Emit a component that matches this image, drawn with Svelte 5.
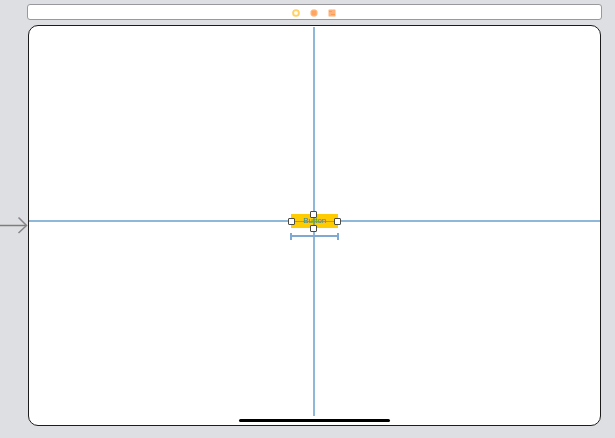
<script>
  const handles = ['top', 'right', 'bottom', 'left'];
</script>

<main class="editor">
  <header class="scene-dock">
    <svg width="10" height="10" viewBox="0 0 10 10" aria-hidden="true">
      <circle cx="5" cy="5" r="2.9" fill="#fffdf2" stroke="#ffd166" stroke-width="1.9" />
    </svg>
    <svg width="10" height="10" viewBox="0 0 10 10" aria-hidden="true">
      <circle cx="5" cy="5" r="3.7" fill="#ffc18d" />
      <rect x="2.5" y="2.5" width="5" height="5" rx="1" fill="#ffa55f" />
    </svg>
    <svg width="10" height="10" viewBox="0 0 10 10" aria-hidden="true">
      <rect x="1.5" y="1.5" width="7" height="7" rx="0.5" fill="#ffb27a" />
      <path d="M2 3.5h3M4 6.5h4" stroke="#ff9c50" stroke-width="1" />
    </svg>
  </header>

  <section class="scene">
    <svg class="entry" width="28" height="18" viewBox="0 0 28 18" aria-hidden="true">
      <path d="M0 9.5H26" stroke="#7c7f79" stroke-width="1.5" fill="none" />
      <path d="M18.5 1.5L26.5 9.5L18.5 17" stroke="#858587" stroke-width="1.5" fill="none" />
    </svg>

    <div class="device">
      <div class="guide horizontal"></div>
      <div class="guide vertical"></div>
      <div class="selection">
        <button type="button">Button</button>
        <div class="cross-h"></div>
        <div class="cross-v"></div>
        {#each handles as side}
          <span class="handle {side}"></span>
        {/each}
        <div class="width-constraint"></div>
      </div>
      <div class="home-indicator"></div>
    </div>
  </section>
</main>

<style>
  :global(body) {
    background: #dedfe3;
  }

  .editor {
    box-sizing: border-box;
    min-height: 100vh;
    padding: 4px 13px 12px 27px;
    display: flex;
    flex-direction: column;
    gap: 5px;
    font-family: "Liberation Sans", Arial, sans-serif;
  }

  .scene-dock {
    box-sizing: border-box;
    height: 16px;
    padding: 2px 2px 0 0;
    display: flex;
    align-items: center;
    justify-content: center;
    gap: 8px;
    background: #fff;
    border: 1px solid #98989d;
    border-radius: 3px;
  }

  .scene {
    position: relative;
    flex: 1;
    display: flex;
    padding: 0 1px;
  }

  .entry {
    position: absolute;
    left: -27px;
    top: 50%;
    transform: translateY(-10px);
  }

  .device {
    position: relative;
    flex: 1;
    display: flex;
    align-items: center;
    justify-content: center;
    background: #fff;
    border: 1px solid #1c1c1d;
    border-radius: 10px;
  }

  .guide {
    position: absolute;
    background: #8fb7d9;
  }

  .horizontal {
    left: 0;
    right: 0;
    top: calc(50% - 6px);
    height: 2px;
  }

  .vertical {
    top: 1px;
    bottom: 9px;
    left: 50%;
    width: 2px;
    margin-left: -2px;
  }

  .selection {
    position: relative;
    width: 47px;
    height: 14px;
    margin-bottom: 10px;
  }

  button {
    display: block;
    width: 100%;
    height: 100%;
    padding: 0;
    border: 0;
    background: #ffcc02;
    color: #2f87a8;
    font: 8px/14px "Liberation Sans", Arial, sans-serif;
    text-align: center;
  }

  .cross-h,
  .cross-v {
    position: absolute;
    background: #799579;
    opacity: 0.8;
  }

  .cross-h {
    left: 0;
    right: 0;
    top: 7px;
    height: 1px;
  }

  .cross-v {
    top: 0;
    bottom: 0;
    left: 22px;
    width: 2px;
  }

  .handle {
    position: absolute;
    box-sizing: border-box;
    width: 7px;
    height: 7px;
    background: #fff;
    border: 1px solid #4b4b46;
    border-radius: 1px;
  }

  .top {
    left: 19px;
    top: -3px;
  }

  .right {
    right: -3px;
    top: 4px;
  }

  .bottom {
    left: 19px;
    bottom: -4px;
  }

  .left {
    left: -3px;
    top: 4px;
  }

  .width-constraint {
    position: absolute;
    left: -1px;
    right: -1px;
    top: 19px;
    height: 7px;
    box-sizing: border-box;
    border: solid #7fa9d0;
    border-width: 0 2px;
    background: linear-gradient(#7fa9d0, #7fa9d0) center / 100% 2px no-repeat;
  }

  .home-indicator {
    position: absolute;
    bottom: 3px;
    left: 50%;
    width: 151px;
    height: 3px;
    margin-left: -76px;
    border-radius: 2px;
    background: #000;
  }
</style>
